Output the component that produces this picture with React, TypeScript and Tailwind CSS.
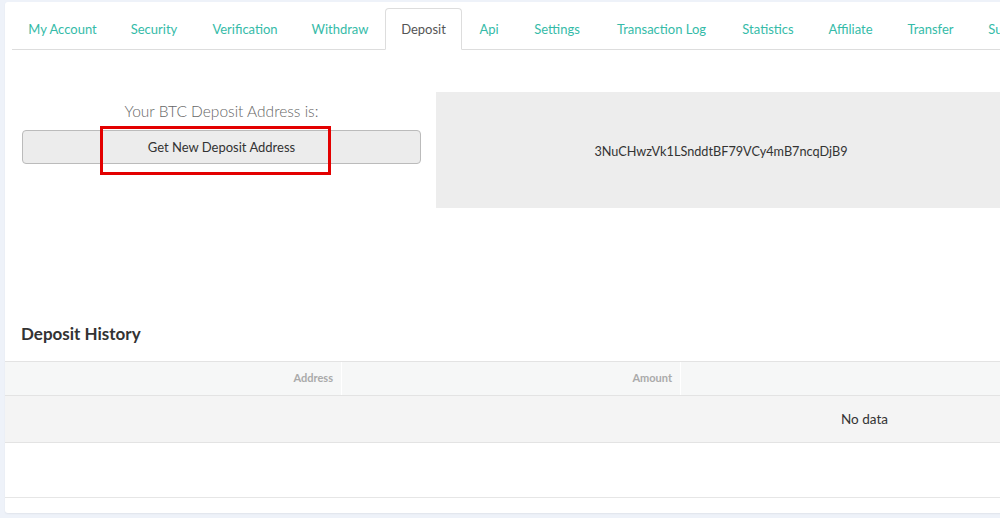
import React from 'react';

// tab widths taken to line up with the original layout
const tabs = [
  { label: 'My Account', w: 'w-[101px]' },
  { label: 'Security', w: 'w-[82px]' },
  { label: 'Verification', w: 'w-[100px]' },
  { label: 'Withdraw', w: 'w-[90px]' },
  { label: 'Deposit', w: 'w-[77px]' },
  { label: 'Api', w: 'w-[54px]' },
  { label: 'Settings', w: 'w-[82px]' },
  { label: 'Transaction Log', w: 'w-[127px]' },
  { label: 'Statistics', w: 'w-[86px]' },
  { label: 'Affiliate', w: 'w-[79px]' },
  { label: 'Transfer', w: 'w-[81px]' },
  { label: 'Support', w: 'w-[80px]' },
];

const App = () => {
  const active = 'Deposit';

  return (
    <div
      className="w-[1000px] h-[518px] overflow-hidden bg-[#eef2f9] pt-[2px] pl-[5px]"
      style={{ fontFamily: 'Lato, "Noto Sans", sans-serif' }}
    >
      <div className="w-[1100px] h-[511px] bg-white rounded-[3px] shadow-[0_1px_2px_rgba(0,0,0,0.06)] flex flex-col">
        {/* tabs */}
        <div className="mt-[6px] ml-[7px] flex border-b border-[#dddddd] h-[42px]">
          {tabs.map((t) => (
            <div
              key={t.label}
              className={
                t.label === active
                  ? `${t.w} flex items-center justify-center pt-[2px] border border-[#dddddd] border-b-white rounded-t-[4px] -mb-px bg-white text-[#555555] text-[13px] whitespace-nowrap`
                  : `${t.w} flex items-center justify-center pt-[2px] border border-transparent text-[#35bba8] text-[13px] whitespace-nowrap`
              }
            >
              {t.label}
            </div>
          ))}
        </div>

        {/* deposit address */}
        <div className="flex mt-[42px] pl-[17px]">
          <div className="w-[399px] flex flex-col items-center pt-[9px]">
            <div className="text-[15.5px] font-light text-[#666666] leading-[20px]">
              Your BTC Deposit Address is:
            </div>
            <div className="relative w-full mt-[9px]">
              <button className="w-full h-[34px] pt-px bg-[#ececec] border border-[#bbbbbb] rounded-[4px] text-[13px] text-[#333333]">
                Get New Deposit Address
              </button>
              <div className="absolute left-[78px] top-[-4px] w-[231px] h-[49px] border-[3px] border-[#e30000]" />
            </div>
          </div>
          <div className="ml-[15px] w-[570px] h-[116px] pt-[3px] bg-[#ededed] flex items-center justify-center text-[12.7px] text-[#333333]">
            3NuCHwzVk1LSnddtBF79VCy4mB7ncqDjB9
          </div>
        </div>

        {/* history */}
        <div className="mt-[115px] pl-[16px] text-[17px] font-bold text-[#333333] leading-[22px]">
          Deposit History
        </div>
        <div className="mt-[16px] w-[995px]">
          <div className="flex h-[35px] bg-[#f6f7f7] border-t border-b border-[#e3e3e3] text-[11px] font-bold text-[#aaaaaa]">
            <div className="w-[337px] flex items-center justify-end pr-2 border-r border-white">Address</div>
            <div className="w-[339px] flex items-center justify-end pr-2 border-r border-white">Amount</div>
            <div className="flex-1" />
          </div>
          <div className="h-[47px] bg-[#f4f4f4] border-b border-[#e3e3e3] flex items-center pl-[836px] text-[13.5px] text-[#333333]">
            No data
          </div>
          <div className="h-[55px] border-b border-[#e6e6e6]" />
        </div>
      </div>
    </div>
  );
};

export default App;
